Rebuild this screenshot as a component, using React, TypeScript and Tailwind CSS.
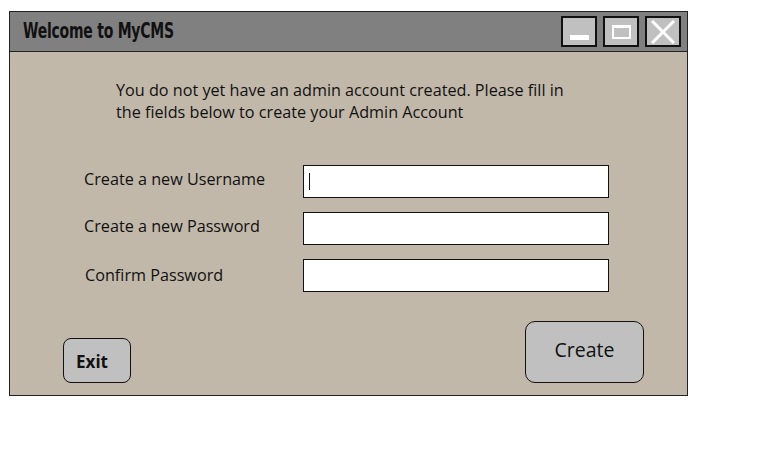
export default function App() {
  const fields = ["Create a new Username", "Create a new Password", "Confirm Password"]

  return (
    <div className="w-[767px] h-[465px] bg-white pl-[9px] pt-[11px]">
      <div className="w-[679px] h-[385px] border border-[#222] flex flex-col bg-[#c1b8aa]">
        {/* title bar */}
        <div className="h-[40px] bg-[#808080] border-b border-[#222] flex items-center justify-between pl-[13px] pr-[6px]">
          <span
            className="inline-block origin-left scale-x-[0.74] text-[21px] font-bold text-[#111] tracking-[-0.3px] whitespace-nowrap"
            style={{ fontFamily: '"DejaVu Sans Condensed", "DejaVu Sans", sans-serif', fontStretch: "condensed" }}
          >
            Welcome to MyCMS
          </span>
          <div className="flex gap-[6px]">
            <div className="w-[36px] h-[31px] bg-[#c0c0c0] border-2 border-[#111] flex items-end justify-center pb-[5px]">
              <div className="w-[19px] h-[5px] bg-white" />
            </div>
            <div className="w-[36px] h-[31px] bg-[#c0c0c0] border-2 border-[#111] flex items-center justify-center">
              <div className="w-[19px] h-[14px] border-2 border-t-[3px] border-white" />
            </div>
            <div className="w-[36px] h-[31px] bg-[#c0c0c0] border-2 border-[#111] flex items-center justify-center">
              <svg width="24" height="24" viewBox="0 0 24 24">
                <path d="M1 1L23 23M23 1L1 23" stroke="white" strokeWidth="3" />
              </svg>
            </div>
          </div>
        </div>

        {/* body */}
        <div
          className="flex-1 flex flex-col text-[#111]"
          style={{ fontFamily: '"Open Sans", Lato, sans-serif' }}
        >
          <p className="pl-[106px] pt-[27px] text-[16.2px] leading-[22px]">
            You do not yet have an admin account created. Please fill in
            <br />
            the fields below to create your Admin Account
          </p>

          <div className="ml-[74px] mt-[42px] grid grid-cols-[219px_306px] gap-y-[14px] items-center">
            {fields.map((label, i) => (
              <div key={label} className="contents">
                <span className={`text-[16.2px] ${i === 2 ? "pl-[1px] -mt-[1px]" : ""} ${i === 0 ? "-mt-[5px]" : ""} ${i === 1 ? "-mt-[4px]" : ""}`}>{label}</span>
                <div className="h-[33px] bg-white border border-[#111] flex items-center pl-[5px]">
                  {i === 0 && <div className="w-[1px] h-[17px] bg-[#111]" />}
                </div>
              </div>
            ))}
          </div>

          <div className="mt-auto flex items-end justify-between pl-[53px] pr-[43px] pb-[12px]">
            <button className="w-[68px] h-[45px] bg-[#c0c0c0] border border-[#111] rounded-[8px] text-[17px] font-bold pt-[2px] pr-[10px]">
              Exit
            </button>
            <button className="w-[119px] h-[62px] bg-[#c0c0c0] border border-[#111] rounded-[10px] text-[19.5px] pb-[4px]">
              Create
            </button>
          </div>
        </div>
      </div>
    </div>
  )
}
